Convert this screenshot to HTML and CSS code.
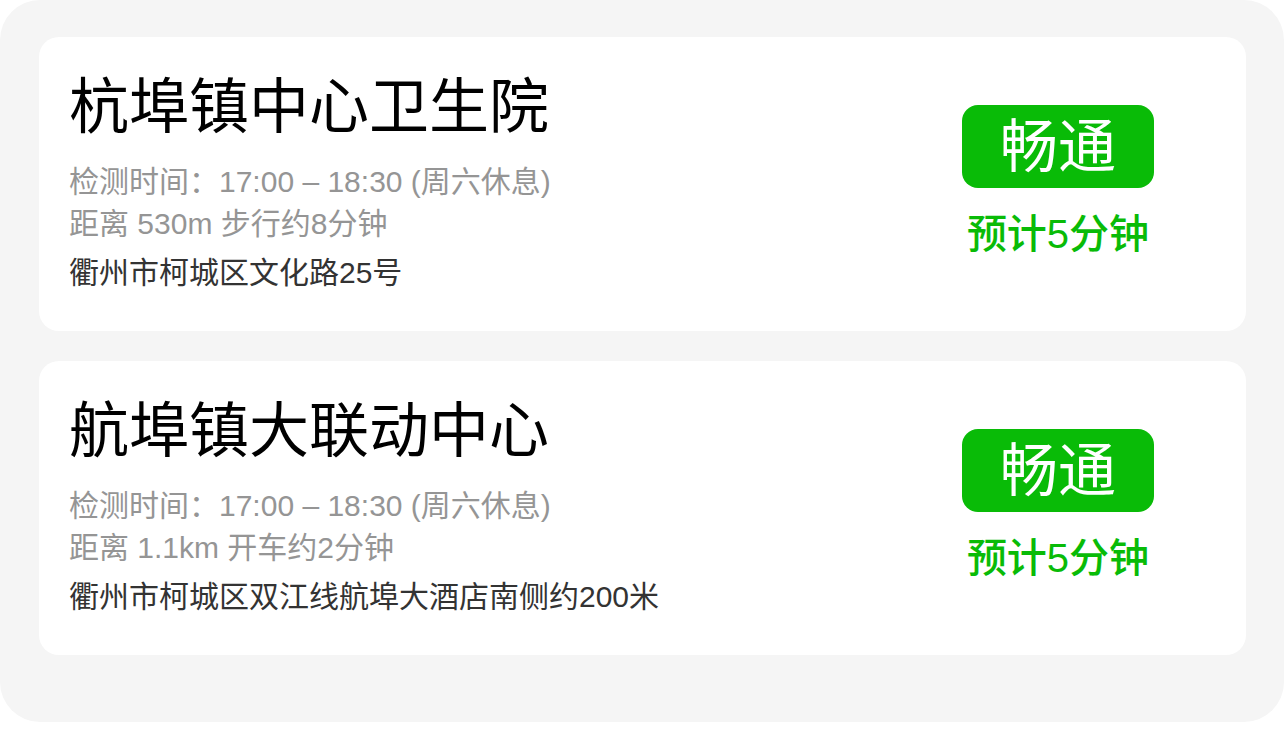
FILE: index.html
```html
<!DOCTYPE html>
<html lang="zh-CN">
<head>
<meta charset="utf-8">
<title>检测点</title>
<link rel="stylesheet" href="styles.css">
</head>
<body>
<div class="panel">
  <div class="card">
    <div class="info">
      <div class="title">杭埠镇中心卫生院</div>
      <div class="meta meta-first">检测时间<span class="colon">：</span>17:00 – 18:30 (周六休息)</div>
      <div class="meta">距离 530m 步行约8分钟</div>
      <div class="addr">衢州市柯城区文化路25号</div>
    </div>
    <div class="status">
      <div class="badge">畅通</div>
      <div class="eta">预计5分钟</div>
    </div>
  </div>
  <div class="card">
    <div class="info">
      <div class="title">航埠镇大联动中心</div>
      <div class="meta meta-first">检测时间<span class="colon">：</span>17:00 – 18:30 (周六休息)</div>
      <div class="meta">距离 1.1km 开车约2分钟</div>
      <div class="addr">衢州市柯城区双江线航埠大酒店南侧约200米</div>
    </div>
    <div class="status">
      <div class="badge">畅通</div>
      <div class="eta">预计5分钟</div>
    </div>
  </div>
</div>
</body>
</html>
```
FILE: styles.css
```css
html, body {
  margin: 0;
  padding: 0;
  background: #ffffff;
}
body {
  font-family: "Liberation Sans", "Noto Sans CJK SC", sans-serif;
}
.panel {
  box-sizing: border-box;
  width: 1284px;
  height: 722px;
  background: #f5f5f5;
  border-radius: 40px;
  padding: 37px 38px 0 39px;
  display: flex;
  flex-direction: column;
  gap: 30px;
}
.card {
  box-sizing: border-box;
  height: 294px;
  background: #ffffff;
  border-radius: 20px;
  padding: 0 92px 0 30px;
  display: flex;
}
.info {
  flex: 1;
  padding-top: 35px;
}
.title {
  font-size: 60px;
  line-height: 72px;
  color: #000000;
}
.meta {
  font-size: 30px;
  line-height: 42px;
  color: #959595;
}
.meta-first {
  margin-top: 14px;
}
.colon {
  font-family: "Noto Sans CJK TC", sans-serif;
}
.addr {
  margin-top: 7px;
  font-size: 30px;
  line-height: 42px;
  color: #333333;
}
.status {
  width: 192px;
  padding-top: 68px;
  display: flex;
  flex-direction: column;
  align-items: center;
}
.badge {
  width: 192px;
  height: 83px;
  border-radius: 16px;
  background: #09bb07;
  color: #ffffff;
  font-size: 58px;
  line-height: 83px;
  text-align: center;
}
.eta {
  margin-top: 21px;
  font-size: 40px;
  line-height: 50px;
  font-weight: 500;
  color: #09bb07;
}
```
